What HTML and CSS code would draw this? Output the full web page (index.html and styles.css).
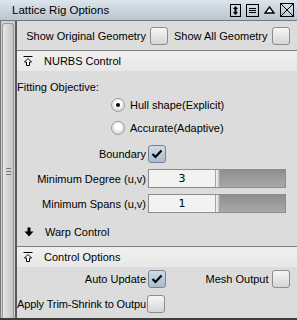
FILE: index.html
```html
<!DOCTYPE html>
<html lang="en">
<head>
  <meta charset="UTF-8">
  <title>Lattice Rig Options</title>
  <link rel="stylesheet" href="styles.css">
</head>
<body>
  <div class="window">
    <div class="titlebar">
      <span class="title">Lattice Rig Options</span>
      <div class="title-icons">
        <svg class="t-box" width="11" height="13" viewBox="0 0 11 13">
          <rect x="0.5" y="0.5" width="10" height="12" fill="none" stroke="#000"/>
          <path d="M5.5 2 L8 5 H3 Z M5.5 11 L8 8 H3 Z" fill="#000"/>
          <rect x="4.5" y="4" width="2" height="5" fill="#000"/>
        </svg>
        <svg class="t-box" width="13" height="13" viewBox="0 0 13 13">
          <rect x="0.5" y="0.5" width="12" height="12" fill="none" stroke="#000"/>
          <path d="M3 4.5 H10 M3 6.5 H10 M3 8.5 H10" stroke="#000"/>
        </svg>
        <svg class="t-tri" width="11" height="8" viewBox="0 0 11 8">
          <path d="M5.5 1 L10 7 H1 Z" fill="#fff" stroke="#000" stroke-width="1.4"/>
        </svg>
        <svg class="t-box" width="14" height="14" viewBox="0 0 14 14">
          <rect x="0.5" y="0.5" width="13" height="13" fill="none" stroke="#000"/>
          <path d="M1 1 L13 13 M13 1 L1 13" stroke="#000"/>
        </svg>
      </div>
    </div>

    <div class="main">
      <div class="dock">
        <div class="grip"><span class="grip-lines"></span></div>
      </div>

      <div class="content">
        <div class="top-row">
          <span class="lbl">Show Original Geometry</span>
          <span class="check"></span>
          <span class="lbl-inline">Show All Geometry</span>
          <span class="check"></span>
        </div>

        <div class="section-head">
          <svg class="head-icon" width="10" height="10" viewBox="0 0 10 10">
            <path d="M0.5 0.5 H9.5" stroke="#000"/>
            <path d="M5 2.5 L8.5 6 H6.5 V9.5 H3.5 V6 H1.5 Z" fill="#fff" stroke="#000"/>
          </svg>
          <span>NURBS Control</span>
        </div>

        <div class="section-body nurbs">
          <div class="row plain">Fitting Objective:</div>
          <div class="row radio-row r1">
            <span class="radio on"></span><span>Hull shape(Explicit)</span>
          </div>
          <div class="row radio-row r2">
            <span class="radio"></span><span>Accurate(Adaptive)</span>
          </div>
          <div class="row form-row boundary">
            <span class="lbl">Boundary</span>
            <span class="check on">
              <svg width="12" height="10" viewBox="0 0 12 10"><path d="M1.5 5 L4.5 8 L10.5 1.5" fill="none" stroke="#000" stroke-width="2.2"/></svg>
            </span>
          </div>
          <div class="row form-row field-row deg">
            <span class="lbl">Minimum Degree (u,v)</span>
            <div class="slider-field">
              <span class="value">3</span>
              <span class="handle"></span>
              <span class="track"></span>
            </div>
          </div>
          <div class="row form-row field-row spans">
            <span class="lbl">Minimum Spans (u,v)</span>
            <div class="slider-field">
              <span class="value">1</span>
              <span class="handle"></span>
              <span class="track"></span>
            </div>
          </div>
          <div class="row sub-head">
            <svg class="head-icon" width="10" height="10" viewBox="0 0 10 10">
              <path d="M3.5 0.5 H6.5 V4.5 H9.5 L5 9.5 L0.5 4.5 H3.5 Z" fill="#000"/>
            </svg>
            <span>Warp Control</span>
          </div>
        </div>

        <div class="section-head">
          <svg class="head-icon" width="10" height="10" viewBox="0 0 10 10">
            <path d="M0.5 0.5 H9.5" stroke="#000"/>
            <path d="M5 2.5 L8.5 6 H6.5 V9.5 H3.5 V6 H1.5 Z" fill="#fff" stroke="#000"/>
          </svg>
          <span>Control Options</span>
        </div>

        <div class="section-body options">
          <div class="row form-row auto">
            <span class="lbl">Auto Update</span>
            <span class="check on">
              <svg width="12" height="10" viewBox="0 0 12 10"><path d="M1.5 5 L4.5 8 L10.5 1.5" fill="none" stroke="#000" stroke-width="2.2"/></svg>
            </span>
            <span class="lbl-inline mesh">Mesh Output</span>
            <span class="check"></span>
          </div>
          <div class="row form-row apply">
            <span class="lbl clip">Apply Trim-Shrink to Outpu</span>
            <span class="check"></span>
          </div>
        </div>
      </div>
    </div>
  </div>
</body>
</html>
```

FILE: styles.css
```css
body {
  margin: 0;
  font-family: 'Liberation Sans', Arial, sans-serif;
  font-size: 11px;
  color: #000;
  background: #fff;
}
.window {
  width: 297px;
  height: 320px;
  box-sizing: border-box;
  display: flex;
  flex-direction: column;
  background: #dcdcdc;
  border-bottom: 2px solid #3c3c3c;
  overflow: hidden;
}
.titlebar {
  height: 20px;
  border-bottom: 1px solid #6f7c88;
  background: linear-gradient(#dde5ec, #c6d1dc 60%, #b9c5d1);
  display: flex;
  align-items: center;
  padding-left: 12px;
  flex-shrink: 0;
}
.title {
  font-size: 11.5px;
  flex: 1;
}
.title-icons {
  display: flex;
  align-items: center;
  gap: 5px;
  margin-right: 3px;
}

.main {
  flex: 1;
  display: flex;
  min-height: 0;
}
.dock {
  border-left: 1px solid #7a7a7a;
  border-right: 2px solid #5a5a5a;
  background: #cfcfcf;
  padding: 2px 1px 0 1px;
  box-sizing: border-box;
  width: 17px;
  flex-shrink: 0;
}
.grip {
  height: 100%;
  border: 1px solid #9a9a9a;
  border-bottom: none;
  border-radius: 3px 3px 0 0;
  background: linear-gradient(90deg, #e6e6e6, #d2d2d2 60%, #c4c4c4);
  display: flex;
  justify-content: center;
  padding-top: 144px;
  box-sizing: border-box;
}
.grip-lines {
  width: 5px;
  height: 7px;
  border-top: 1px solid #777;
  border-bottom: 1px solid #777;
  box-sizing: border-box;
  position: relative;
}
.grip-lines::after {
  content: "";
  position: absolute;
  left: 0;
  right: 0;
  top: 2px;
  border-top: 1px solid #777;
}

.content {
  flex: 1;
  border-right: 1px solid #5e5e5e;
  margin-right: 1px;
  display: flex;
  flex-direction: column;
}
.top-row {
  height: 29px;
  border-bottom: 1px solid #7c7c7c;
  display: flex;
  align-items: center;
  flex-shrink: 0;
}
.top-row .lbl { margin-right: 3px; }
.top-row .check { margin-left: 1px; }
.lbl {
  width: 129px;
  text-align: right;
  white-space: nowrap;
  overflow: hidden;
  margin-right: 2px;
  flex-shrink: 0;
}
.lbl.clip {
  text-align: left;
  letter-spacing: -0.12px;
}
.lbl-inline {
  margin: 0 3px 0 auto;
  white-space: nowrap;
}
.top-row .lbl-inline { margin-left: 6px; }
.top-row .check:last-child, .options .check:last-child { margin-right: 9px; }

.section-head {
  height: 20px;
  background: linear-gradient(#efefef, #e8e8e8);
  display: flex;
  align-items: center;
  padding-left: 6px;
  flex-shrink: 0;
}
.head-icon { margin-right: 11px; flex-shrink: 0; }

.check {
  width: 18px;
  height: 18px;
  box-sizing: border-box;
  border: 1px solid #8d8d8d;
  border-radius: 3px;
  background: linear-gradient(#f6f6f6, #d6d6d6);
  display: flex;
  align-items: center;
  justify-content: center;
  flex-shrink: 0;
}
.check.on {
  background: linear-gradient(#cfdbe7, #a9bccf);
  border-color: #768595;
}

.row {
  display: flex;
  align-items: center;
}
.nurbs {
  padding-top: 9px;
  border-bottom: 1px solid #7c7c7c;
  padding-bottom: 6px;
}
.plain { height: 14px; }
.radio-row { height: 14px; padding-left: 94px; }
.r1 { margin-top: 4px; }
.r2 { margin-top: 9px; }
.radio {
  width: 14px;
  height: 14px;
  box-sizing: border-box;
  border-radius: 50%;
  border: 1px solid #9c9c9c;
  background: radial-gradient(circle at 50% 40%, #ffffff 30%, #d4d4d4 75%);
  margin-right: 5px;
  display: flex;
  align-items: center;
  justify-content: center;
}
.radio.on::after {
  content: "";
  width: 4px;
  height: 4px;
  border-radius: 50%;
  background: #000;
}
.boundary { margin-top: 10px; height: 18px; }
.field-row { height: 19px; }
.deg { margin-top: 6px; }
.spans { margin-top: 6px; }
.slider-field {
  width: 138px;
  height: 19px;
  box-sizing: border-box;
  border: 1px solid #8c8c8c;
  display: flex;
}
.value {
  width: 66px;
  background: #f2f2f2;
  font-family: 'DejaVu Sans', sans-serif;
  font-size: 11px;
  text-align: center;
  line-height: 17px;
}
.handle {
  width: 5px;
  background: linear-gradient(90deg, #7e7e7e, #f0f0f0 30%, #cfcfcf 70%, #8a8a8a);
}
.track {
  flex: 1;
  background: linear-gradient(#8e8e8e, #a9a9a9);
}
.sub-head {
  height: 17px;
  margin-top: 10px;
  padding-left: 7px;
}

.options { padding-top: 3px; }
.auto { height: 18px; }
.mesh { margin-right: 3px; }
.apply { height: 18px; margin-top: 7px; }
.apply .lbl { margin-right: 1px; }
```
